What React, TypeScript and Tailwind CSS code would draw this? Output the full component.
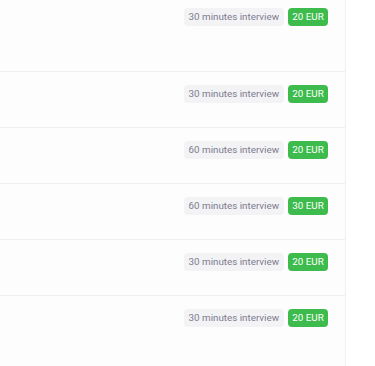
const rows = [
  { label: '30 minutes interview', price: '20 EUR' },
  { label: '30 minutes interview', price: '20 EUR' },
  { label: '60 minutes interview', price: '20 EUR' },
  { label: '60 minutes interview', price: '30 EUR' },
  { label: '30 minutes interview', price: '20 EUR' },
  { label: '30 minutes interview', price: '20 EUR' },
]

function Badges({ label, price }: { label: string; price: string }) {
  return (
    <div className="flex justify-end gap-1">
      <span className="h-[18px] rounded bg-[#f3f3f6] px-[5px] text-[9.8px] leading-[18px] text-[#7c7c8e]">
        {label}
      </span>
      <span className="h-[18px] w-[40px] rounded bg-[#3dbb4c] text-center text-[9.8px] leading-[18px] text-white">
        {price}
      </span>
    </div>
  )
}

export default function App() {
  return (
    <div className="flex h-[366px] w-[375px] overflow-hidden bg-white font-['Roboto',sans-serif]">
      <div className="w-[346px] border-r border-[#f0f0f2] bg-[#fdfdfd]">
        {rows.map((r, i) => (
          <div
            key={i}
            className={
              i === 0
                ? 'border-b border-[#f0f0f2] pr-[17px] pt-2 pb-[45px]'
                : 'border-b border-[#f0f0f2] pr-[17px] pt-[13px] pb-[24px] last:border-b-0'
            }
          >
            <Badges label={r.label} price={r.price} />
          </div>
        ))}
      </div>
      <div className="flex-1 bg-white" />
    </div>
  )
}
